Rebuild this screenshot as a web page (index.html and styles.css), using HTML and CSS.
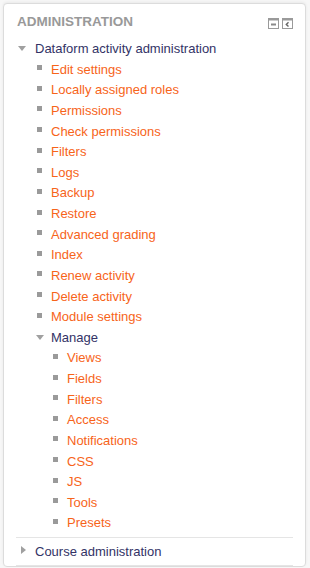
FILE: index.html
```html
<!DOCTYPE html>
<html lang="en">
  <head>
    <meta charset="UTF-8" />
    <meta name="viewport" content="width=device-width, initial-scale=1.0" />
    <title>Administration</title>
    <link rel="stylesheet" href="styles.css">
  </head>
  <body>
    <div class="block">
      <div class="block-header">
        <h2>Administration</h2>
        <div class="block-controls">
          <svg width="11" height="11" viewBox="0 0 11 11">
            <rect x="0.5" y="0.5" width="10" height="10" fill="#fff" stroke="#9a9a9a" />
            <rect x="1" y="1" width="9" height="1.5" fill="#9a9a9a" />
            <rect x="3" y="5.5" width="5" height="2" fill="#8a8a8a" />
          </svg>
          <svg width="11" height="11" viewBox="0 0 11 11">
            <rect x="0.5" y="0.5" width="10" height="10" fill="#fff" stroke="#9a9a9a" />
            <rect x="1" y="1" width="9" height="1.5" fill="#9a9a9a" />
            <path d="M6.5 4.2 L4.3 6.4 L6.5 8.6" fill="none" stroke="#666" stroke-width="1.4" />
          </svg>
        </div>
      </div>

      <ul class="tree">
        <li class="branch">
          <div class="row"><span class="arrow down"></span><span class="branch-name">Dataform activity administration</span></div>
          <ul class="sub">
            <li class="row"><span class="bullet"></span><a href="#">Edit settings</a></li>
            <li class="row"><span class="bullet"></span><a href="#">Locally assigned roles</a></li>
            <li class="row"><span class="bullet"></span><a href="#">Permissions</a></li>
            <li class="row"><span class="bullet"></span><a href="#">Check permissions</a></li>
            <li class="row"><span class="bullet"></span><a href="#">Filters</a></li>
            <li class="row"><span class="bullet"></span><a href="#">Logs</a></li>
            <li class="row"><span class="bullet"></span><a href="#">Backup</a></li>
            <li class="row"><span class="bullet"></span><a href="#">Restore</a></li>
            <li class="row"><span class="bullet"></span><a href="#">Advanced grading</a></li>
            <li class="row"><span class="bullet"></span><a href="#">Index</a></li>
            <li class="row"><span class="bullet"></span><a href="#">Renew activity</a></li>
            <li class="row"><span class="bullet"></span><a href="#">Delete activity</a></li>
            <li class="row"><span class="bullet"></span><a href="#">Module settings</a></li>
            <li>
              <div class="row"><span class="arrow down inner"></span><span class="branch-name">Manage</span></div>
              <ul class="sub">
                <li class="row"><span class="bullet"></span><a href="#">Views</a></li>
                <li class="row"><span class="bullet"></span><a href="#">Fields</a></li>
                <li class="row"><span class="bullet"></span><a href="#">Filters</a></li>
                <li class="row"><span class="bullet"></span><a href="#">Access</a></li>
                <li class="row"><span class="bullet"></span><a href="#">Notifications</a></li>
                <li class="row"><span class="bullet"></span><a href="#">CSS</a></li>
                <li class="row"><span class="bullet"></span><a href="#">JS</a></li>
                <li class="row"><span class="bullet"></span><a href="#">Tools</a></li>
                <li class="row"><span class="bullet"></span><a href="#">Presets</a></li>
              </ul>
            </li>
          </ul>
        </li>
        <li class="branch">
          <div class="row"><span class="arrow right"></span><span class="branch-name">Course administration</span></div>
        </li>
      </ul>
    </div>
  </body>
</html>
```

FILE: styles.css
```css
body {
  margin: 0;
  padding: 3px 4px 0 3px;
  background-color: #f7f7f7;
  font-family: "Liberation Sans", Arial, sans-serif;
  font-size: 13px;
}

.block {
  background-color: #fff;
  border: 1px solid #dcdcdc;
  border-radius: 4px;
  padding: 0 12px;
  box-shadow: 0 -1px 3px rgba(0, 0, 0, 0.06);
}

.block-header {
  display: flex;
  justify-content: space-between;
  align-items: center;
  padding: 8px 0 3px 1px;
}

.block-header h2 {
  margin: 0;
  font-size: 13.5px;
  line-height: 20px;
  font-weight: bold;
  text-transform: uppercase;
  color: #999;
}

.block-controls {
  display: flex;
  gap: 3px;
  margin-top: 3px;
}

.block-controls svg {
  display: block;
}

.tree,
.tree ul {
  list-style: none;
  margin: 0;
  padding: 0;
}

.tree .branch {
  padding: 3.2px 0 3.5px;
  border-bottom: 1px solid #e5e5e5;
}

.tree .sub {
  padding-left: 19px;
}

.tree .sub .sub {
  padding-left: 16px;
}

.row {
  display: flex;
  align-items: center;
  height: 20.64px;
  white-space: nowrap;
}

.branch-name {
  color: #333366;
}

.row a {
  color: #f7641a;
  text-decoration: none;
}

.bullet {
  width: 5px;
  height: 5px;
  margin: 0 9px 3px 2px;
  background-color: #9a9a9a;
  flex-shrink: 0;
}

.arrow {
  width: 8px;
  height: 9px;
  margin: 0 9px 0 2px;
  position: relative;
  flex-shrink: 0;
}

.arrow.inner {
  margin: 0 7px 0 1px;
}

.arrow.down::before {
  content: "";
  position: absolute;
  left: 0;
  top: 2px;
  border-left: 4px solid transparent;
  border-right: 4px solid transparent;
  border-top: 5px solid #a0a0a0;
}

.arrow.right::before {
  content: "";
  position: absolute;
  left: 3px;
  top: -1px;
  border-top: 4.5px solid transparent;
  border-bottom: 4.5px solid transparent;
  border-left: 5px solid #a0a0a0;
}
```
